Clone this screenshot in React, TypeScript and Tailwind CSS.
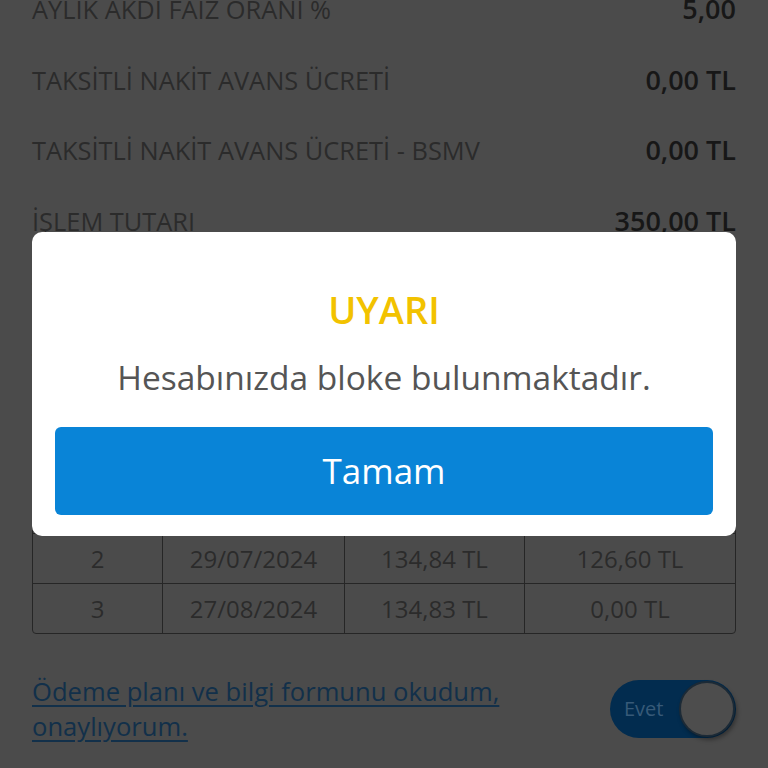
import * as React from "react";

const rows = [
    { label: "AYLIK AKDİ FAİZ ORANI %", value: "5,00" },
    { label: "TAKSİTLİ NAKİT AVANS ÜCRETİ", value: "0,00 TL" },
    { label: "TAKSİTLİ NAKİT AVANS ÜCRETİ - BSMV", value: "0,00 TL" },
    { label: "İŞLEM TUTARI", value: "350,00 TL" },
    { label: "TOPLAM GERİ ÖDEME TUTARI", value: "404,51 TL" },
    { label: "TAKSİT SAYISI", value: "3" },
];

const plan = [
    ["Taksit", "Tarih", "Tutar", "Kalan"],
    ["1", "28/06/2024", "134,84 TL", "261,44 TL"],
    ["2", "29/07/2024", "134,84 TL", "126,60 TL"],
    ["3", "27/08/2024", "134,83 TL", "0,00 TL"],
];

const App = () => {
    return (
        <div className="relative w-[768px] h-[768px] overflow-hidden bg-[#4b4b4b] font-['Open_Sans',sans-serif]">
            <div className="px-8 -mt-[26px]">
                {rows.map((r) => (
                    <div key={r.label} className="flex items-center justify-between h-[70.5px]">
                        <span className="text-[25.4px] text-[#2b2b2b]">{r.label}</span>
                        <span className="text-[27px] font-semibold text-[#171717]">{r.value}</span>
                    </div>
                ))}

                <div className="mt-[35px] border border-[#262626] rounded-b-[4px]">
                    {plan.map((row, i) => (
                        <div
                            key={i}
                            className={`grid grid-cols-[129px_182px_180px_1fr] h-[50px] ${i > 0 ? "border-t border-[#262626]" : ""}`}
                        >
                            {row.map((cell, j) => (
                                <div
                                    key={j}
                                    className={`flex items-center justify-center text-[24px] text-[#2b2b2b] ${j > 0 ? "border-l border-[#262626]" : ""}`}
                                >
                                    {cell}
                                </div>
                            ))}
                        </div>
                    ))}
                </div>

                <div className="mt-[40px] flex items-start justify-between">
                    <a className="text-[25.6px] leading-[35px] text-[#12304a] underline underline-offset-[4px] w-[490px]">
                        Ödeme planı ve bilgi formunu okudum, onaylıyorum.
                    </a>
                    <div className="mt-[6px] w-[126px] h-[58px] rounded-full bg-[#022c4f] flex items-center justify-between pl-[14px] pr-[1px]">
                        <span className="text-[20px] text-[#375a78]">Evet</span>
                        <div className="w-[56px] h-[56px] rounded-full bg-[#4d4d4d] border-2 border-[#1c2a36] shadow-[2px_3px_4px_rgba(0,0,0,0.35)]"></div>
                    </div>
                </div>
            </div>

            {/* modal */}
            <div className="absolute left-8 top-[232px] w-[704px] bg-white rounded-[10px] px-[23px] pt-[52px] pb-[21px] flex flex-col items-center">
                <div className="text-[38px] leading-[50px] font-semibold text-[#f2c200]">UYARI</div>
                <div className="mt-[21px] text-[33.5px] leading-[44px] text-[#555555]">
                    Hesabınızda bloke bulunmaktadır.
                </div>
                <button className="mt-[28px] w-full h-[88px] rounded-[6px] bg-[#0984d7] text-white text-[35px]">
                    Tamam
                </button>
            </div>
        </div>
    );
};

export default App;
